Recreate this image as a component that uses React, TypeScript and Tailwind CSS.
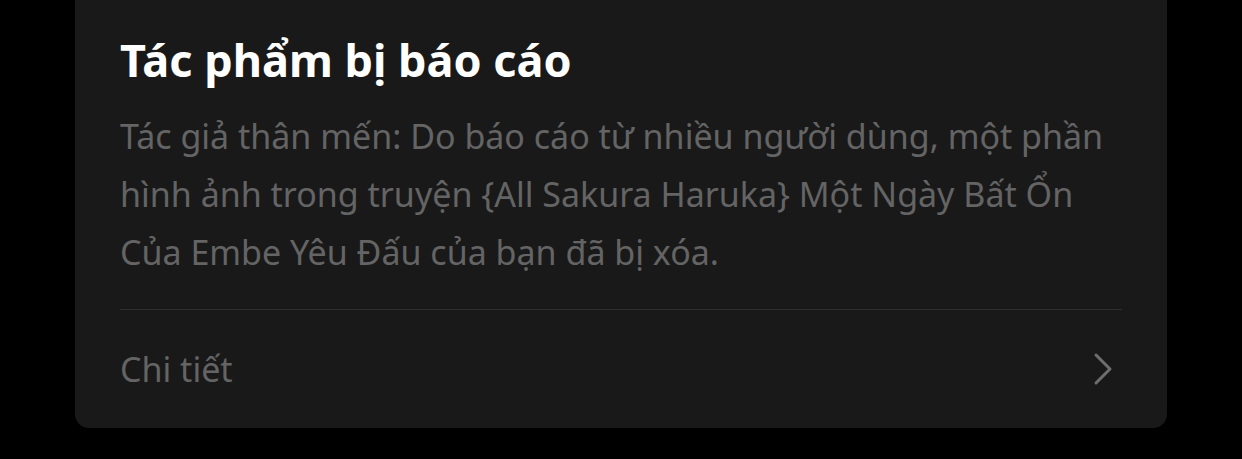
export default function App() {
  return (
    <div
      className="w-[1242px] h-[459px] bg-black overflow-hidden"
      style={{ fontFamily: '"Noto Sans", "Open Sans", sans-serif' }}
    >
      <div className="ml-[75px] w-[1092px] h-[428px] bg-[#191919] rounded-b-[14px] px-[45px] pt-[30px] flex flex-col">
        <h1 className="text-[45px] leading-[60px] font-bold text-white">
          Tác phẩm bị báo cáo
        </h1>
        <p className="mt-[17px] text-[34px] leading-[58px] text-[#646464]">
          Tác giả thân mến: Do báo cáo từ nhiều người dùng, một phần
          <br />
          hình ảnh trong truyện {"{All Sakura Haruka}"} Một Ngày Bất Ổn
          <br />
          Của Embe Yêu Đấu của bạn đã bị xóa.
        </p>
        <div className="mt-[28px] h-px bg-[#2e2e2e]" />
        <button className="flex-1 flex items-center justify-between text-left">
          <span className="text-[34px] text-[#646464]">Chi tiết</span>
          <svg
            width="22"
            height="34"
            viewBox="0 0 22 34"
            fill="none"
            stroke="#6e6e6e"
            strokeWidth="3"
            strokeLinecap="round"
            strokeLinejoin="round"
            className="mr-[8px]"
          >
            <path d="M4 3 L18 17 L4 31" />
          </svg>
        </button>
      </div>
    </div>
  );
}
